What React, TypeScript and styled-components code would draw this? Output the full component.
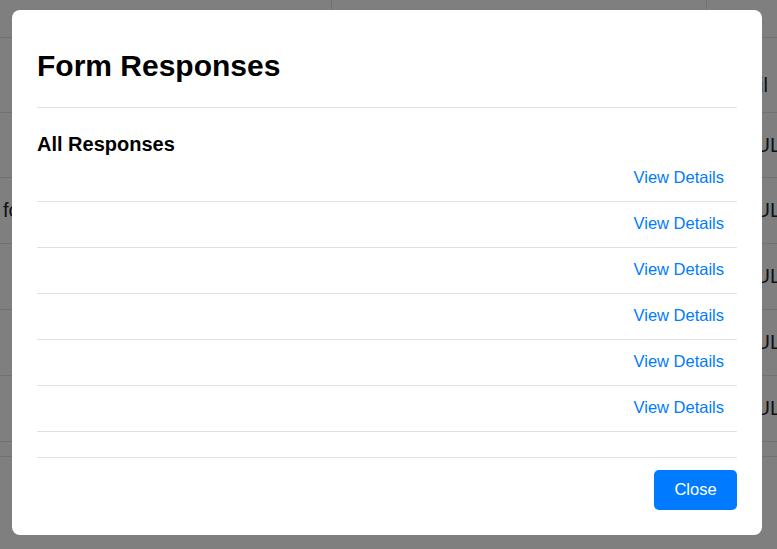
import styled, { createGlobalStyle } from "styled-components";

const GlobalStyle = createGlobalStyle`
  html, body {
    margin: 0;
    padding: 0;
    background: #fff;
    font-family: "Liberation Sans", Arial, sans-serif;
    overflow: hidden;
  }
`;

// the page behind the dialog
const Page = styled.div`
  width: 777px;
  height: 549px;
  overflow: hidden;
  color: #212529;
`;
const TopRow = styled.div`
  display: grid;
  grid-template-columns: 332px 375px 1fr;
  height: 38px;
  border-bottom: 1px solid #dee2e6;
  box-sizing: border-box;
  & > div {
    border-right: 1px solid #dee2e6;
  }
  & > div:last-child {
    border-right: 0;
  }
`;
const HeadRow = styled.div`
  display: grid;
  grid-template-columns: 332px 375px 1fr;
  height: 75px;
  align-items: end;
  padding-bottom: 15px;
  box-sizing: border-box;
  border-bottom: 1px solid #dee2e6;
  font-size: 20px;
  white-space: nowrap;
`;
const DataRow = styled.div<{ $h?: number }>`
  display: grid;
  grid-template-columns: 332px 375px 1fr;
  height: ${(p) => p.$h ?? 66}px;
  align-items: center;
  box-sizing: border-box;
  border-bottom: 1px solid #dee2e6;
  font-size: 20px;
  white-space: nowrap;
`;
const Cell = styled.div<{ $pad?: number }>`
  padding-left: ${(p) => p.$pad ?? 3}px;
  overflow: hidden;
`;

const Overlay = styled.div`
  position: fixed;
  inset: 0;
  background: rgba(0, 0, 0, 0.5);
  padding: 10px 15px 0 12px;
`;
const Modal = styled.div`
  background: #fff;
  border-radius: 8px;
  padding: 0 25px;
  color: #000;
`;
const Header = styled.div`
  padding: 38px 0 23px;
  border-bottom: 1px solid #dee2e6;
`;
const Title = styled.h2`
  margin: 0;
  font-size: 30px;
  line-height: 36px;
  font-weight: 700;
`;
const Body = styled.div`
  padding: 25px 0;
`;
const SubTitle = styled.h3`
  margin: 0;
  font-size: 20px;
  line-height: 23px;
  font-weight: 700;
`;
const List = styled.ul`
  list-style: none;
  margin: 0;
  padding: 0;
`;
const Item = styled.li`
  display: flex;
  justify-content: flex-end;
  align-items: center;
  height: 46px;
  box-sizing: border-box;
  padding: 0 13px 2px 0;
  border-bottom: 1px solid #dee2e6;
`;
const DetailsLink = styled.a`
  color: #007bff;
  font-size: 16.5px;
  text-decoration: none;
  cursor: pointer;
`;
const Footer = styled.div`
  display: flex;
  justify-content: flex-end;
  padding: 12px 0 25px;
  border-top: 1px solid #dee2e6;
`;
const CloseButton = styled.button`
  height: 40px;
  width: 83px;
  border: 0;
  border-radius: 5px;
  padding: 0 0 2px;
  background: #007bff;
  color: #fff;
  font-family: "Liberation Sans", Arial, sans-serif;
  font-size: 16.5px;
  cursor: pointer;
`;

const responses = [1, 2, 3, 4, 5, 6];

export default function App() {
  return (
    <>
      <GlobalStyle />
      <Page>
        <TopRow>
          <div />
          <div />
          <div />
        </TopRow>
        <HeadRow>
          <Cell />
          <Cell />
          <Cell $pad={11}>Email</Cell>
        </HeadRow>
        <DataRow $h={65}>
          <Cell />
          <Cell />
          <Cell $pad={34}>NULL</Cell>
        </DataRow>
        <DataRow>
          <Cell>form</Cell>
          <Cell />
          <Cell $pad={34}>NULL</Cell>
        </DataRow>
        <DataRow>
          <Cell />
          <Cell />
          <Cell $pad={34}>NULL</Cell>
        </DataRow>
        <DataRow>
          <Cell />
          <Cell />
          <Cell $pad={34}>NULL</Cell>
        </DataRow>
        <DataRow>
          <Cell />
          <Cell />
          <Cell $pad={34}>NULL</Cell>
        </DataRow>
        <DataRow $h={15} />
      </Page>
      <Overlay>
        <Modal>
          <Header>
            <Title>Form Responses</Title>
          </Header>
          <Body>
            <SubTitle>All Responses</SubTitle>
            <List>
              {responses.map((r) => (
                <Item key={r}>
                  <DetailsLink>View Details</DetailsLink>
                </Item>
              ))}
            </List>
          </Body>
          <Footer>
            <CloseButton>Close</CloseButton>
          </Footer>
        </Modal>
      </Overlay>
    </>
  );
}
